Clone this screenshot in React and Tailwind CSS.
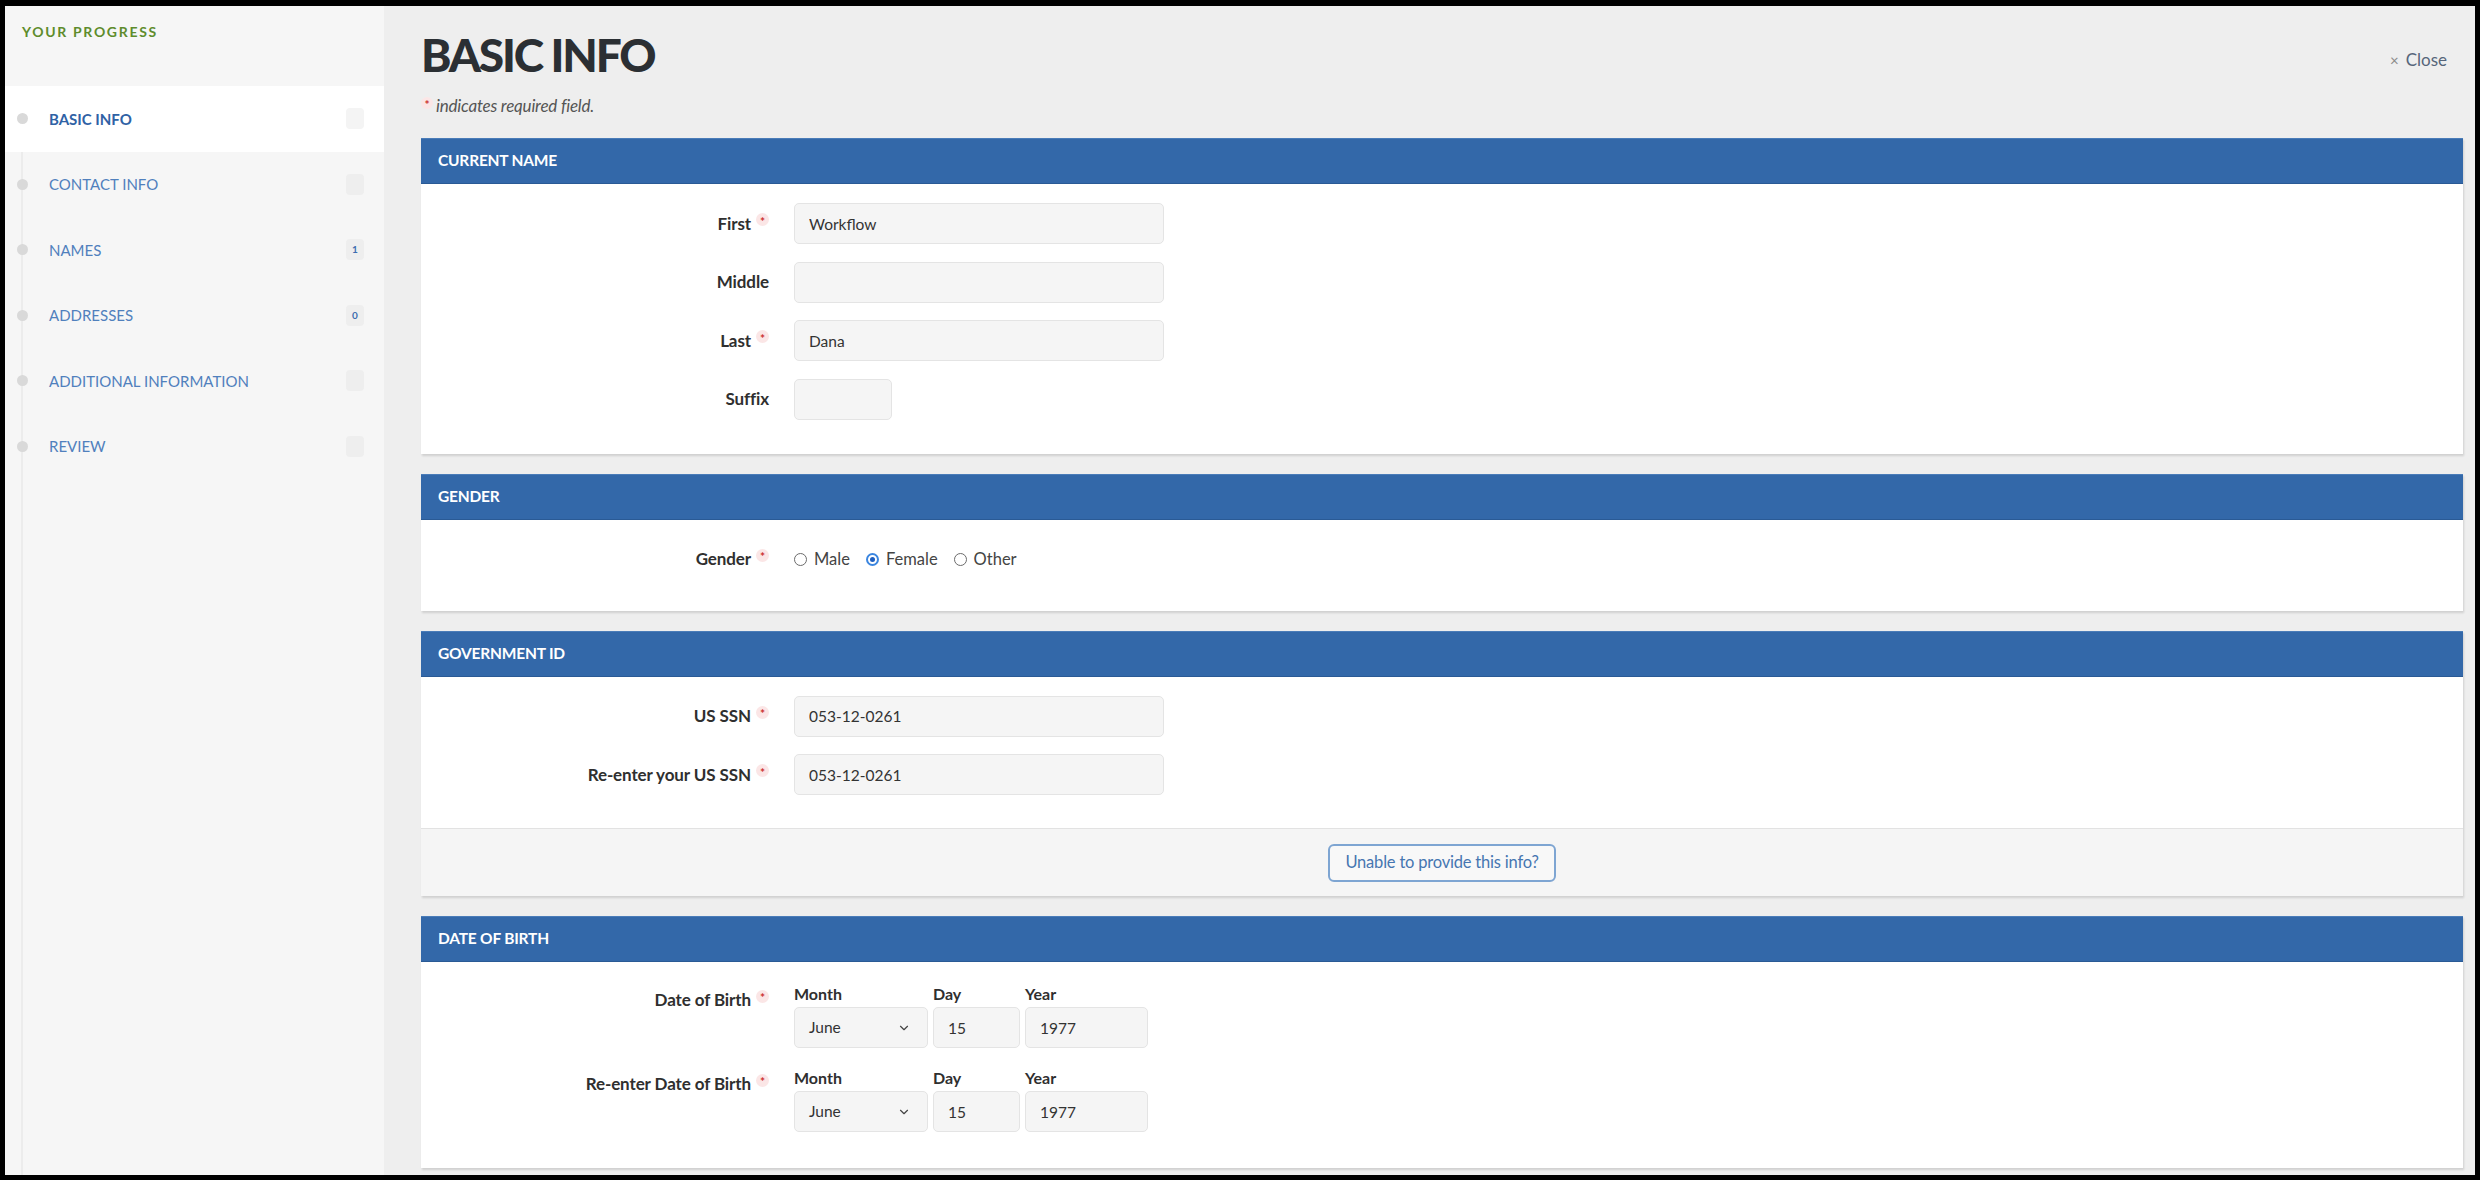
import { ChevronDown } from 'lucide-react';

const steps = [
  { id: 'basic', name: 'BASIC INFO', active: true },
  { id: 'contact', name: 'CONTACT INFO' },
  { id: 'names', name: 'NAMES', count: '1' },
  { id: 'addresses', name: 'ADDRESSES', count: '0' },
  { id: 'additional', name: 'ADDITIONAL INFORMATION' },
  { id: 'review', name: 'REVIEW' },
];

function Req() {
  return (
    <span className="ml-[5px] relative -top-[4px] inline-flex w-[13px] h-[13px] rounded-full bg-[#fbe6e6] items-center justify-center text-[12px] leading-none text-[#cc2f2f] font-bold">
      <span className="relative top-[2px]">*</span>
    </span>
  );
}

function Field({ value = '', width = 'w-[370px]' }) {
  return (
    <input
      readOnly
      defaultValue={value}
      className={`${width} h-[41px] rounded-[5px] border border-[#e4e4e4] bg-[#f5f5f5] px-[14px] text-[15.5px] text-[#333] outline-none`}
    />
  );
}

function Row({ label, req, top, children }) {
  return (
    <div className={top ? 'flex items-start' : 'flex items-center'}>
      <div className={`w-[348px] flex justify-end items-center text-[17px] font-bold tracking-[-0.1px] text-[#2f2f2f] leading-[20px] ${top ? 'pt-[5px]' : ''}`}>
        {label}
        {req && <Req />}
      </div>
      <div className="ml-[25px]">{children}</div>
    </div>
  );
}

function Card({ title, children, footer }) {
  return (
    <section className="bg-white shadow-[1px_2px_2px_rgba(0,0,0,0.13)] mb-[20px]">
      <div className="h-[46px] bg-[#3368a9] border-t border-[#4a7cb8] border-b border-b-[#2a5a95] flex items-center pl-[17px] text-white font-bold text-[15.5px] tracking-[-0.2px] uppercase">
        {title}
      </div>
      {children}
      {footer}
    </section>
  );
}

function Radio({ label, checked }) {
  return (
    <label className="flex items-center mr-[16px]">
      {checked ? (
        <span className="w-[13px] h-[13px] rounded-full border-[2px] border-[#3b86e0] bg-white flex items-center justify-center">
          <span className="w-[5px] h-[5px] rounded-full bg-[#1e5fc0]" />
        </span>
      ) : (
        <span className="w-[13px] h-[13px] rounded-full border border-[#6b6b6b] bg-white" />
      )}
      <span className="ml-[7px] text-[16.5px] text-[#444]">{label}</span>
    </label>
  );
}

function DateGroup({ label }) {
  return (
    <Row label={label} req top>
      <div className="flex gap-[5px]">
        <div className="flex flex-col">
          <span className="h-[18px] leading-[18px] text-[16px] font-bold text-[#2f2f2f] mb-[4px]">Month</span>
          <div className="w-[134px] h-[41px] rounded-[5px] border border-[#e4e4e4] bg-[#f5f5f5] pl-[14px] pr-[16px] flex items-center justify-between text-[15.5px] text-[#333]">
            June
            <ChevronDown size={14} strokeWidth={2} className="text-[#444]" />
          </div>
        </div>
        <div className="flex flex-col">
          <span className="h-[18px] leading-[18px] text-[16px] font-bold text-[#2f2f2f] mb-[4px]">Day</span>
          <Field value="15" width="w-[87px]" />
        </div>
        <div className="flex flex-col">
          <span className="h-[18px] leading-[18px] text-[16px] font-bold text-[#2f2f2f] mb-[4px]">Year</span>
          <Field value="1977" width="w-[123px]" />
        </div>
      </div>
    </Row>
  );
}

export default function App() {
  return (
    <div
      className="w-[2480px] h-[1180px] border-t-[6px] border-l-[5px] border-r-[5px] border-b-[5px] border-black flex overflow-hidden bg-[#eeeeee]"
      style={{ fontFamily: 'Lato, "Open Sans", sans-serif' }}
    >
      <aside className="w-[379px] shrink-0 bg-[#f6f6f6] pt-[18px]">
        <div className="pl-[17px] h-[16px] leading-[16px] text-[14px] font-bold tracking-[0.12em] text-[#5e8c2c]">
          YOUR PROGRESS
        </div>
        <div className="relative mt-[46px]">
          <div className="absolute left-[16px] top-0 bottom-[-800px] w-[2px] bg-[#ececec]" />
          {steps.map((step) => (
            <div
              key={step.id}
              className={`relative h-[65.5px] flex items-center pl-[12px] pr-[20px] ${step.active ? 'bg-white' : ''}`}
            >
              <span className="w-[11px] h-[11px] rounded-full bg-[#d9d9d9]" />
              <span
                className={`ml-[21px] text-[15px] ${step.active ? 'font-bold text-[#2f62a5]' : 'text-[#5080bd]'}`}
              >
                {step.name}
              </span>
              <span
                className={`ml-auto w-[18px] h-[21px] rounded-[4px] flex items-center justify-center text-[10px] font-bold text-[#3d6db0] ${step.active ? 'bg-[#f4f4f4]' : 'bg-[#eeeeee]'}`}
              >
                {step.count}
              </span>
            </div>
          ))}
        </div>
      </aside>

      <main className="flex-1 pl-[37px] pr-[12px] pt-[26px]">
        <div className="flex justify-between items-start">
          <h1 className="text-[46px] leading-[46px] font-black tracking-[-2.2px] text-[#2b2f33]">BASIC INFO</h1>
          <button className="mt-[18px] mr-[16px] flex items-center leading-[20px] text-[17px] text-[#56657a]">
            <span className="text-[15px] text-[#8a8a8a] mr-[7px]">×</span>
            Close
          </button>
        </div>
        <p className="mt-[18px] h-[20px] flex items-center text-[17px] italic tracking-[-0.2px] text-[#555]">
          <span className="inline-flex w-[12px] h-[12px] rounded-full bg-[#fbe6e6] items-center justify-center text-[12px] leading-none text-[#cc2f2f] font-bold not-italic mr-[3px] relative -top-[3px]">
            <span className="relative top-[2px]">*</span>
          </span>
          indicates required field.
        </p>

        <div className="mt-[22px]">
          <Card title="Current Name">
            <div className="pt-[19px] pb-[34px] flex flex-col gap-[17.5px]">
              <Row label="First" req><Field value="Workflow" /></Row>
              <Row label="Middle"><Field /></Row>
              <Row label="Last" req><Field value="Dana" /></Row>
              <Row label="Suffix"><Field width="w-[98px]" /></Row>
            </div>
          </Card>

          <Card title="Gender">
            <div className="pt-[19px] pb-[31px]">
              <Row label="Gender" req>
                <div className="h-[41px] flex items-center">
                  <Radio label="Male" />
                  <Radio label="Female" checked />
                  <Radio label="Other" />
                </div>
              </Row>
            </div>
          </Card>

          <Card
            title="Government ID"
            footer={
              <div className="h-[68px] border-t border-[#e2e2e2] bg-[#f5f5f5] flex items-center justify-center">
                <button className="h-[38px] px-[15px] rounded-[6px] border-2 border-[#7ea5d2] bg-[#f8f8f8] text-[16.5px] tracking-[-0.2px] text-[#4676b1]">
                  Unable to provide this info?
                </button>
              </div>
            }
          >
            <div className="pt-[19px] pb-[33px] flex flex-col gap-[17.5px]">
              <Row label="US SSN" req><Field value="053-12-0261" /></Row>
              <Row label="Re-enter your US SSN" req><Field value="053-12-0261" /></Row>
            </div>
          </Card>

          <Card title="Date of Birth">
            <div className="pt-[23px] pb-[36px] flex flex-col gap-[21px]">
              <DateGroup label="Date of Birth" />
              <DateGroup label="Re-enter Date of Birth" />
            </div>
          </Card>
        </div>
      </main>
    </div>
  );
}
